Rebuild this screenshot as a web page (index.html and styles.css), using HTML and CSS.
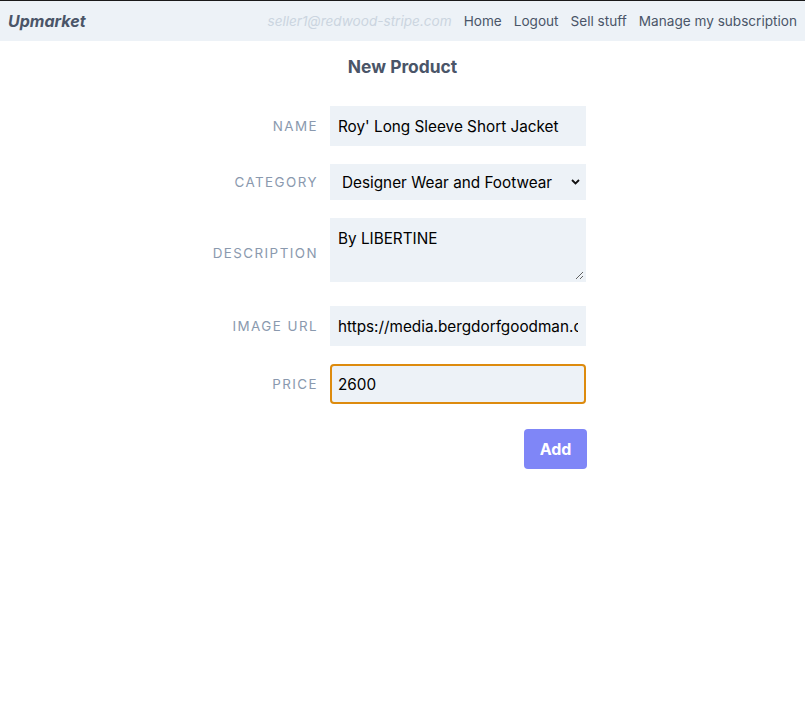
FILE: index.html
```html
<!DOCTYPE html>
<html>
<head>
<meta charset="utf-8">
<link rel="stylesheet" href="styles.css">
</head>
<body>
<nav class="nav">
  <a class="brand">Upmarket</a>
  <div class="links">
    <span class="email">seller1@redwood-stripe.com</span>
    <a>Home</a>
    <a>Logout</a>
    <a>Sell stuff</a>
    <a>Manage my subscription</a>
  </div>
</nav>
<h1 class="title">New Product</h1>
<form class="form">
  <label class="label">Name</label>
  <input class="field" type="text" value="Roy' Long Sleeve Short Jacket">
  <label class="label">Category</label>
  <select class="field select"><option>Designer Wear and Footwear</option></select>
  <label class="label">Description</label>
  <textarea class="field area">By LIBERTINE</textarea>
  <label class="label">Image URL</label>
  <input class="field" type="text" value="https://media.bergdorfgoodman.com/images/product.jpg">
  <label class="label">Price</label>
  <input class="field focus" type="text" value="2600">
  <div></div>
  <div class="actions"><button type="button" class="btn">Add</button></div>
</form>
</body>
</html>
```
FILE: styles.css
```css
html, body { margin: 0; padding: 0; background: #fff; }
body { font-family: Inter, "Noto Sans", sans-serif; color: #4a5568; }
.nav {
  border-top: 1px solid #1a1a1a;
  background: #edf2f7;
  height: 40px;
  display: flex;
  align-items: center;
  justify-content: space-between;
  padding: 0 8px;
}
.brand { font-weight: 700; font-style: italic; font-size: 16px; color: #4a5568; }
.links { display: flex; gap: 12px; font-size: 13.6px; align-items: center; }
.links a { color: #4a5568; }
.email { color: #cbd5e0; font-style: italic; }
.title {
  margin: 15px 0 0;
  text-align: center;
  font-size: 17.4px;
  font-weight: 700;
  color: #4a5568;
  line-height: 22px;
}
.form {
  display: grid;
  grid-template-columns: 1fr 256px;
  column-gap: 12px;
  row-gap: 18px;
  padding-right: 219px;
  margin-top: 28px;
  align-items: center;
}
.label {
  text-align: right;
  text-transform: uppercase;
  letter-spacing: 1.45px;
  font-size: 13.4px;
  color: #8a99ae;
}
.field {
  box-sizing: border-box;
  width: 256px;
  height: 40px;
  border: 2px solid #edf2f7;
  border-radius: 0;
  background: #edf2f7;
  font-family: Inter, "Noto Sans", sans-serif;
  font-size: 15.3px;
  color: #000;
  padding: 0 6px;
  outline: none;
}
.select {
  height: 36px;
  padding: 0 10px;
  -webkit-appearance: none;
  appearance: none;
  background-image: url("data:image/svg+xml;utf8,<svg xmlns='http://www.w3.org/2000/svg' width='9' height='6' viewBox='0 0 9 6'><path d='M1 1l3.5 3.5 3.5-3.5' stroke='%23111' stroke-width='1.8' fill='none'/></svg>");
  background-repeat: no-repeat;
  background-position: right 4px center;
}
.area {
  height: 64px;
  padding: 8px 6px;
  resize: vertical;
  margin-bottom: 6px;
  line-height: 22px;
}
.focus { border-color: #dd8b0e; border-radius: 4px; }
.actions { display: flex; justify-content: flex-end; margin-top: 7px; margin-right: -1px; }
.btn {
  background: #7f86f7;
  color: #fff;
  border: none;
  border-radius: 4px;
  font-family: Inter, "Noto Sans", sans-serif;
  font-weight: 700;
  font-size: 16px;
  width: 63px;
  height: 40px;
}
```
